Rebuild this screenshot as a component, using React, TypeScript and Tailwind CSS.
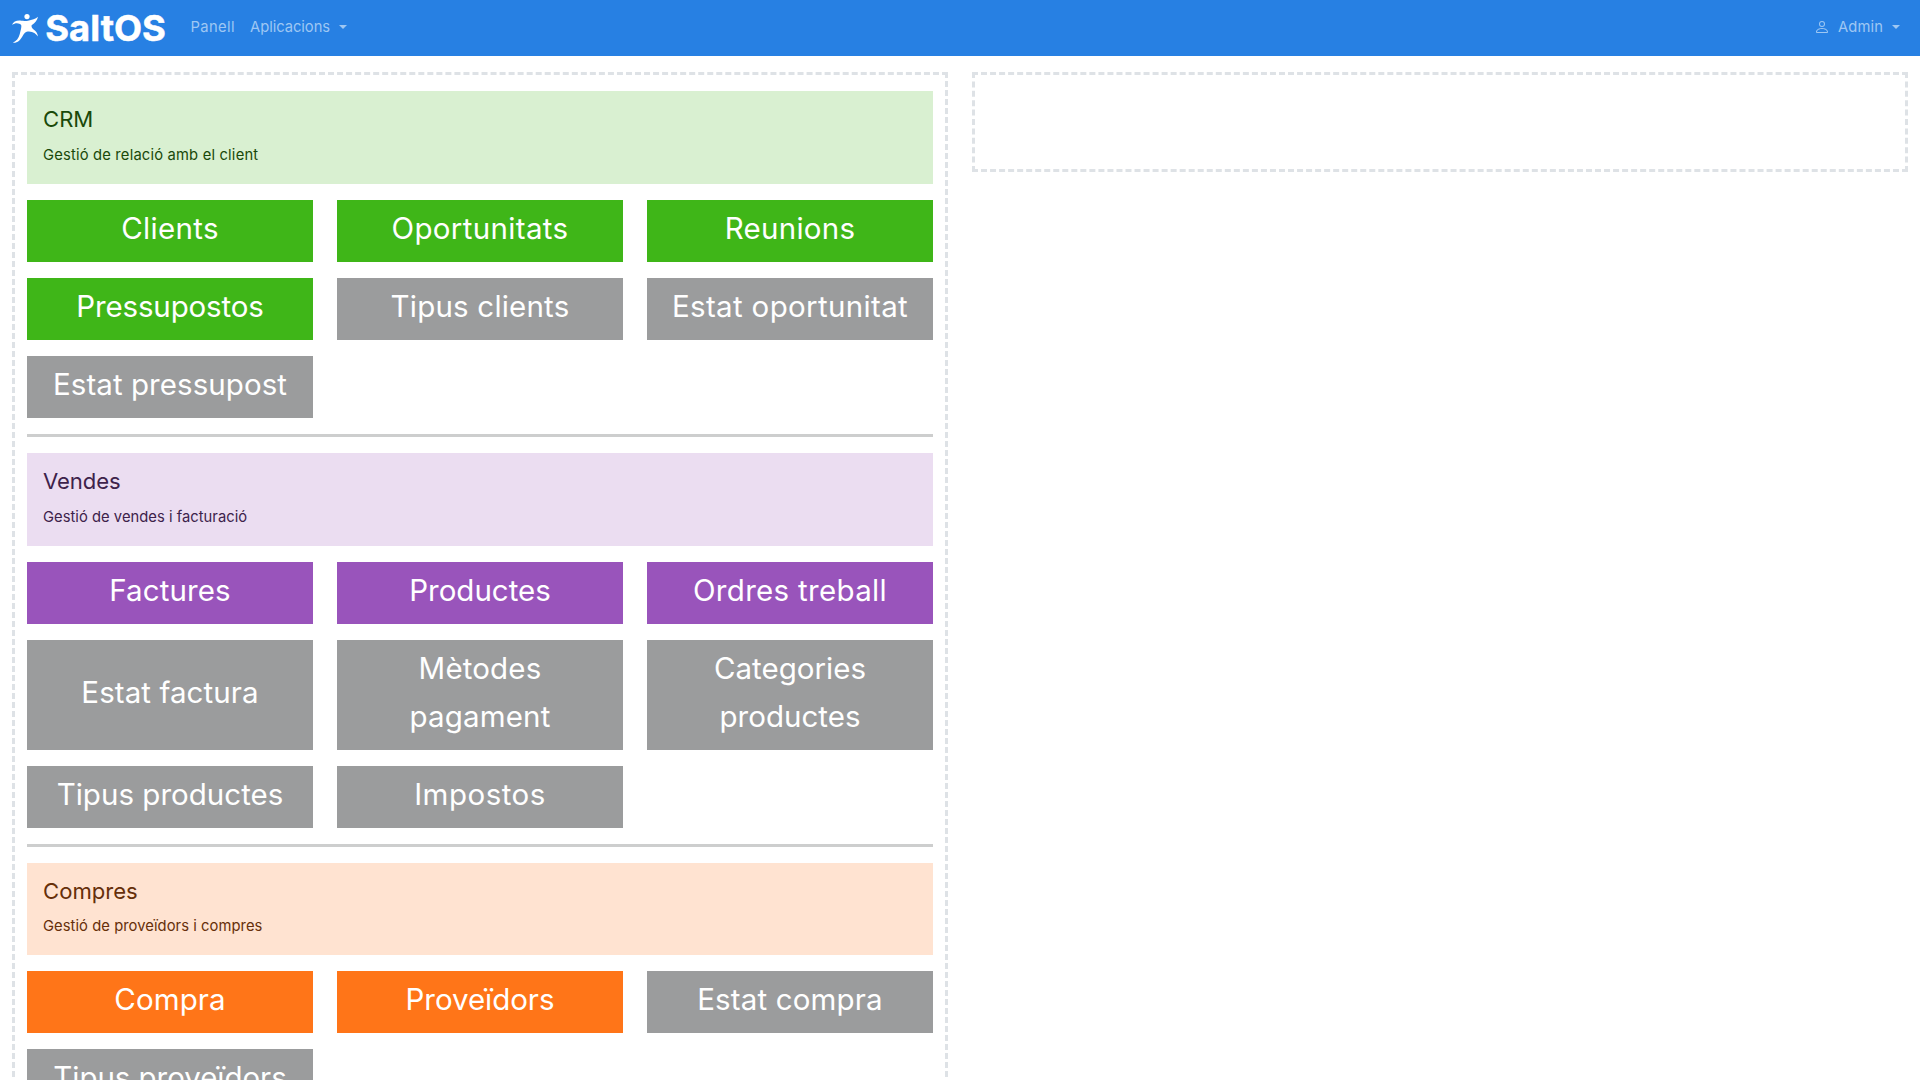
import React from 'react';
import { BsPerson } from 'react-icons/bs';

type Tile = { label: string; track: string; muted?: boolean };
type Group = {
  title: string;
  titleTrack: string;
  text: string;
  textTrack: string;
  card: string;
  button: string;
  tiles: Tile[];
};

const groups: Group[] = [
  {
    title: 'CRM',
    titleTrack: 'tracking-[0px]',
    text: 'Gestió de relació amb el client',
    textTrack: 'tracking-[0.18px]',
    card: 'bg-[#d9f0d1] text-[#19490a]',
    button: 'bg-[#3fb618]',
    tiles: [
      { label: 'Clients', track: 'tracking-[0.3px]' },
      { label: 'Oportunitats', track: 'tracking-[0.35px]' },
      { label: 'Reunions', track: 'tracking-[0.25px]' },
      { label: 'Pressupostos', track: 'tracking-[-0.14px]' },
      { label: 'Tipus clients', track: 'tracking-[0.2px]', muted: true },
      { label: 'Estat oportunitat', track: 'tracking-[0.34px]', muted: true },
      { label: 'Estat pressupost', track: 'tracking-[0.06px]', muted: true },
    ],
  },
  {
    title: 'Vendes',
    titleTrack: 'tracking-[-0.1px]',
    text: 'Gestió de vendes i facturació',
    textTrack: 'tracking-[0.03px]',
    card: 'bg-[#ebddf1] text-[#3d224b]',
    button: 'bg-[#9954bb]',
    tiles: [
      { label: 'Factures', track: 'tracking-[0.1px]' },
      { label: 'Productes', track: 'tracking-[0px]' },
      { label: 'Ordres treball', track: 'tracking-[0.32px]' },
      { label: 'Estat factura', track: 'tracking-[0.08px]', muted: true },
      { label: 'Mètodes pagament', track: 'tracking-[0.15px]', muted: true },
      { label: 'Categories productes', track: 'tracking-[0.03px]', muted: true },
      { label: 'Tipus productes', track: 'tracking-[0.02px]', muted: true },
      { label: 'Impostos', track: 'tracking-[0.5px]', muted: true },
    ],
  },
  {
    title: 'Compres',
    titleTrack: 'tracking-[0px]',
    text: 'Gestió de proveïdors i compres',
    textTrack: 'tracking-[0.06px]',
    card: 'bg-[#ffe3d1] text-[#662f0a]',
    button: 'bg-[#ff7518]',
    tiles: [
      { label: 'Compra', track: 'tracking-[0.1px]' },
      { label: 'Proveïdors', track: 'tracking-[-0.04px]' },
      { label: 'Estat compra', track: 'tracking-[0.15px]', muted: true },
      { label: 'Tipus proveïdors', track: 'tracking-[-0.05px]', muted: true },
    ],
  },
];

function Logo() {
  return (
    <svg width="160" height="46" viewBox="0 -8 160 46" fill="#fff" className="block">
      <circle cx="15" cy="4.6" r="2.6" />
      <path d="M0 12.8C1.2 9.6 4 8.3 8 8.4C11 8.6 13 9.2 16 8.7C20 8.1 23.5 7 26 4.8C25.3 8.3 23 11.2 19.6 13.3C19.3 14.9 20 16.2 21.6 17.6C23.8 19.3 25.6 21.2 26 24.6C24.2 21.6 21.2 19.6 17 19.4C13.3 19.4 12.2 21.2 10.5 24.2C8.3 28.2 5.3 31.2 .8 30.7C4.3 29.2 6.7 26.2 7.7 22.2C8.6 18.5 9.8 15.2 9.2 13C7.5 10.9 3.5 10.3 0 12.8Z" />
      <text
        x="33.3"
        y="29.1"
        fontFamily="Inter, sans-serif"
        fontWeight="700"
        fontSize="36"
        stroke="#fff"
        strokeWidth="0.5"
        textLength="120.5"
        lengthAdjust="spacingAndGlyphs"
      >
        SaltOS
      </text>
    </svg>
  );
}

function Caret({ className }: { className: string }) {
  return (
    <span
      className={`h-0 w-0 border-x-[4.8px] border-t-[4.8px] border-x-transparent border-t-current ${className}`}
    />
  );
}

function Section({ group }: { group: Group }) {
  return (
    <section>
      <div className={`h-[92.8px] p-4 ${group.card}`}>
        <h5 className={`-mt-0.5 mb-[9px] text-[22.1px] leading-[28.8px] ${group.titleTrack}`}>{group.title}</h5>
        <p className={`text-[14.75px] leading-6 ${group.textTrack}`}>{group.text}</p>
      </div>
      <div className="mt-4 grid grid-cols-3 gap-x-6 gap-y-4">
        {group.tiles.map((t) => (
          <button
            key={t.label}
            className={`flex items-center justify-center px-[13px] pt-1 pb-2.5 text-center text-[29.5px] leading-[48px] text-white ${t.track} ${t.muted ? 'bg-[#9b9c9d]' : group.button}`}
          >
            {t.label}
          </button>
        ))}
      </div>
      <hr className="my-4 h-[3px] border-0 bg-[#cdcece]" />
    </section>
  );
}

export default function App() {
  return (
    <div className="h-[1080px] overflow-hidden bg-white font-['Inter',sans-serif]">
      <nav className="flex h-14 items-start bg-[#2780e3] px-3 text-[14.75px] leading-6 text-[#9ec7f3]">
        <div className="pt-1">
          <Logo />
        </div>
        <a className="ml-[18.5px] pt-[14.5px] tracking-[0.4px]">Panell</a>
        <a className="ml-[15px] flex items-center pt-[14.5px]">
          <span className="tracking-[-0.05px]">Aplicacions</span>
          <Caret className="ml-[9px]" />
        </a>
        <a className="mr-2 ml-auto flex items-center pt-[14.5px]">
          <BsPerson className="mr-2 size-4" />
          <span className="tracking-[0.12px]">Admin</span>
          <Caret className="ml-[9px]" />
        </a>
      </nav>
      <main className="grid grid-cols-2 items-start gap-6 px-3 pt-4">
        <div className="border-[3px] border-dashed border-[#dee2e6] px-3 pt-4">
          {groups.map((g) => (
            <Section key={g.title} group={g} />
          ))}
        </div>
        <div className="h-[100px] border-[3px] border-dashed border-[#dee2e6]" />
      </main>
    </div>
  );
}
